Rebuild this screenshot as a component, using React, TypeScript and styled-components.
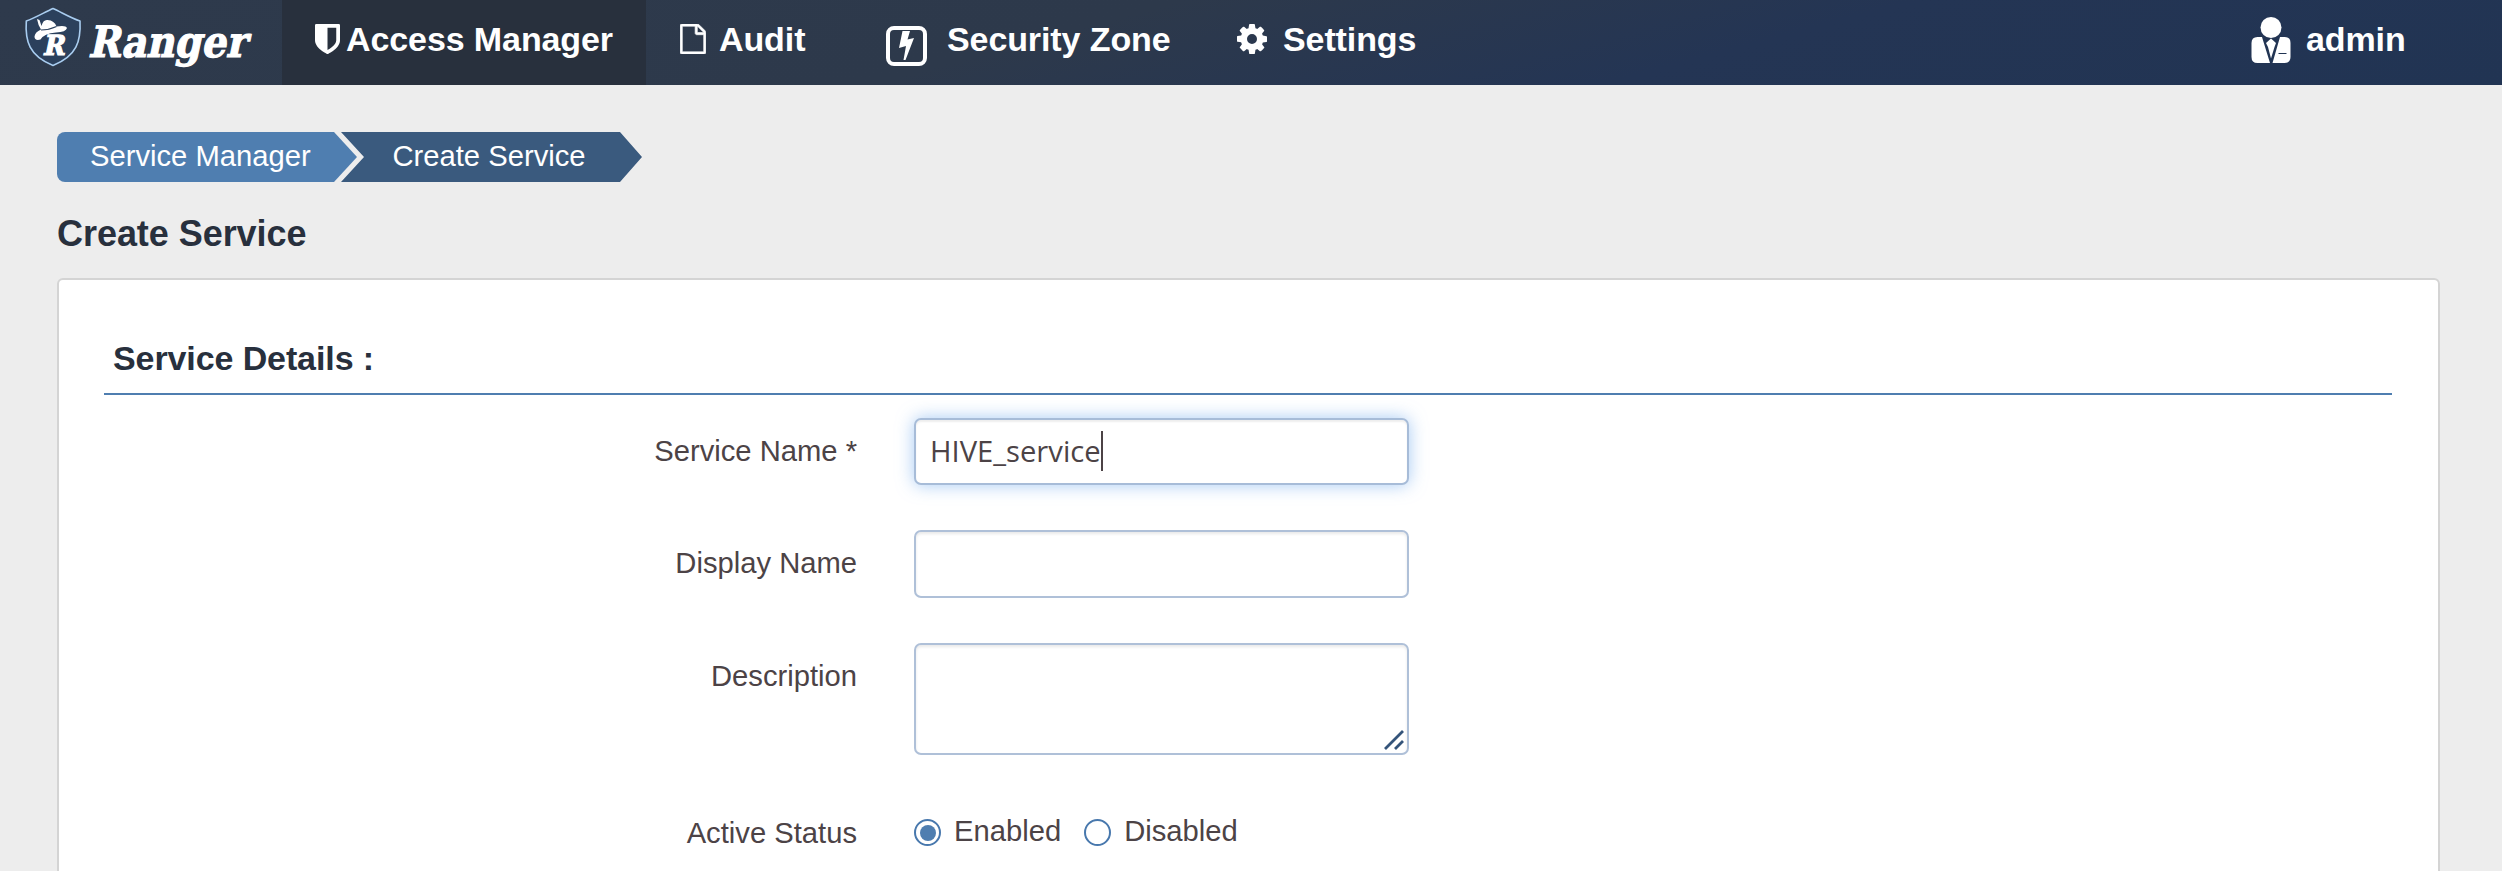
import React from "react";
import styled, { createGlobalStyle, css } from "styled-components";

const Global = createGlobalStyle`
  * { box-sizing: border-box; }
  html, body { margin: 0; padding: 0; background: #ededed; }
  body { font-family: "Liberation Sans", Arial, sans-serif; color: #4c4346; overflow: hidden; }
`;

const Page = styled.div`
  width: 2502px;
  height: 871px;
  overflow: hidden;
  background: #ededed;
`;

const Header = styled.header`
  display: flex;
  height: 85px;
  background: linear-gradient(165deg, #2e3a4c 0%, #2d394b 42%, #243554 68%, #213453 100%);
`;

const Brand = styled.a`
  display: block;
  width: 282px;
  height: 85px;
`;

const NavItem = styled.a<{ $active?: boolean; $left: number; $width?: number; $gap: number }>`
  display: flex;
  align-items: flex-start;
  height: 85px;
  width: ${(p) => (p.$width ? `${p.$width}px` : "auto")};
  padding-left: ${(p) => p.$left}px;
  gap: ${(p) => p.$gap}px;
  font-size: 34px;
  font-weight: 700;
  line-height: 40px;
  letter-spacing: -0.1px;
  white-space: nowrap;
  color: #fff;
  ${(p) => p.$active && css`background: #28303d;`}
  span { margin-top: 19px; }
`;

const Glyph = styled.svg<{ $top: number }>`
  flex: none;
  margin-top: ${(p) => p.$top}px;
`;

const User = styled(NavItem)`
  margin-left: auto;
`;

const Main = styled.main`
  padding: 47px 62px 0 57px;
`;

const Crumbs = styled.nav`
  display: flex;
  height: 50px;
  font-size: 29.2px;
  line-height: 48px;
  color: #fff;
`;

const Crumb = styled.a<{ $last?: boolean }>`
  white-space: nowrap;
  ${(p) =>
    p.$last
      ? css`
          width: 301px;
          margin-left: -16px;
          padding-left: 51.5px;
          background: #3a5a7e;
          clip-path: polygon(0 0, 279px 0, 100% 50%, 279px 100%, 0 100%, 23px 50%);
        `
      : css`
          width: 300px;
          padding-left: 33px;
          background: #4f7eb0;
          border-radius: 8px 0 0 8px;
          clip-path: polygon(0 0, 277px 0, 100% 50%, 277px 100%, 0 100%);
        `}
`;

const Title = styled.h1`
  margin: 31px 0 0;
  font-size: 36px;
  line-height: 42px;
  letter-spacing: -0.05px;
  color: #28303d;
`;

const Card = styled.section`
  height: 660px;
  margin-top: 23px;
  padding: 55px 46px 0 45px;
  background: #fff;
  border: 2px solid #d4d4d4;
  border-radius: 6px;
`;

const Legend = styled.h2`
  margin: 0;
  height: 60px;
  padding: 4px 0 0 9px;
  font-size: 34px;
  line-height: 38px;
  letter-spacing: -0.1px;
  color: #28303d;
  border-bottom: 2px solid #4f7eb0;
`;

const Form = styled.form`
  display: flex;
  flex-direction: column;
  padding-top: 23px;
`;

const Row = styled.div<{ $height: number }>`
  display: flex;
  gap: 57px;
  height: ${(p) => p.$height}px;
`;

const Label = styled.label<{ $top: number }>`
  width: 753px;
  padding-top: ${(p) => p.$top}px;
  text-align: right;
  font-size: 29.2px;
  line-height: 34px;
`;

const Field = styled.div<{ $height: number; $focus?: boolean }>`
  display: flex;
  justify-content: flex-start;
  width: 495px;
  height: ${(p) => p.$height}px;
  padding: 11px 14px;
  border: 2px solid #afc0d8;
  border-radius: 7px;
  background: #fff;
  font-family: "Open Sans", "Noto Sans", sans-serif;
  font-size: 29.2px;
  line-height: 40px;
  box-shadow: inset 0 2px 3px rgba(0, 0, 0, 0.09);
  ${(p) =>
    p.$focus &&
    css`
      border-color: #a7bcd8;
      box-shadow: inset 0 2px 2px rgba(0, 0, 0, 0.07), 0 0 17px rgba(111, 169, 238, 0.62);
    `}
`;

const Caret = styled.i`
  width: 2px;
  height: 40px;
  background: #4c4346;
`;

const Grip = styled.svg`
  margin: auto -11px -8px auto;
`;

const Radios = styled.div`
  display: flex;
  align-items: flex-start;
  font-size: 29.2px;
  line-height: 34px;
`;

const Radio = styled.span<{ $on?: boolean }>`
  width: 27px;
  height: 27px;
  margin: 5px 13px 0 0;
  border: 2px solid #4878ad;
  border-radius: 50%;
  background: ${(p) => (p.$on ? "#4f7eb0" : "#fff")};
  background-clip: content-box;
  padding: 3.5px;
`;

const Choice = styled.label`
  display: flex;
  margin-right: 23px;
`;

const Logo = () => (
  <svg width="282" height="85" viewBox="0 0 282 85">
    <path
      d="M53 8.500C45 12 35 18 26.300 21C25 41 29 56 53 65.500C77 56 81 41 80 21C71 18 61 12 53 8.500Z"
      fill="#2b405c" stroke="#a9cdf0" strokeWidth="1.600" strokeLinejoin="round"
    />
    <path d="M37 19L39.500 20L41.500 26Q43 19.500 47.500 20Q54.500 20.500 56.500 26.500Q66 25 67 28Q66 32 56 32.500Q44 33.500 40.500 39.500Q34.500 41 34.500 36.500Q35 32 41 29.500Q38 25 37 19Z" fill="#fff" />
    <path d="M41 30Q49 30 56.500 26.500" fill="none" stroke="#2b405c" strokeWidth="1.200" />
    <g fontFamily="DejaVu Serif" fontWeight="700" fill="#fff" stroke="#fff" strokeWidth="1.200">
      <text transform="translate(42.500 55) skewX(-12)" fontSize="27.500" textLength="21.500" lengthAdjust="spacingAndGlyphs">R</text>
      <text transform="translate(88 56.500) skewX(-12)" fontSize="43" textLength="158" lengthAdjust="spacingAndGlyphs">Ranger</text>
    </g>
  </svg>
);

export default function App() {
  return (
    <Page>
      <Global />
      <Header>
        <Brand><Logo /></Brand>
        <NavItem $active $left={33} $width={364} $gap={6}>
          <Glyph $top={24} width="25" height="30" viewBox="0 0 1280 1536" fill="#fff">
            <path d="M1088 832V192H640v1137q119-63 213-137 235-184 235-360zm192-768v768q0 86-33.500 170.500T1163 1152t-118 127.500-126 103-121 77.500-89.500 49.500T666 1530q-12 6-26 6t-26-6q-16-7-42.500-20.500T482 1460t-121-77.500-126-103T117 1152t-83.500-149.500T0 832V64q0-26 19-45T64 0h1152q26 0 45 19t19 45z" />
          </Glyph>
          <span>Access Manager</span>
        </NavItem>
        <NavItem $left={33.5} $width={240} $gap={13.5}>
          <Glyph $top={24} width="26" height="30" viewBox="0 0 1536 1792" fill="#fff" stroke="#fff" strokeWidth="40">
            <path d="M1468 380q28 28 48 76t20 88v1152q0 40-28 68t-68 28H96q-40 0-68-28t-28-68V96q0-40 28-68T96 0h896q40 0 88 20t76 48zm-444-244v376h376q-10-29-22-41l-313-313q-12-12-41-22zm384 1528V640H992q-40 0-68-28t-28-68V128H128v1536z" />
          </Glyph>
          <span>Audit</span>
        </NavItem>
        <NavItem $left={0} $width={351} $gap={20}>
          <Glyph $top={26} width="41" height="40" viewBox="0 0 41 40">
            <rect x="2" y="2" width="37" height="36" rx="6" fill="none" stroke="#fff" strokeWidth="4" />
            <path d="M16.500 5H24L21.500 13.500L28 12L19.500 34H17.500L20 20L13 22Z" fill="#fff" />
          </Glyph>
          <span>Security Zone</span>
        </NavItem>
        <NavItem $left={0} $gap={16}>
          <Glyph $top={24} width="30" height="30" viewBox="0 0 1536 1536" fill="#fff">
            <path d="M1024 768q0-106-75-181t-181-75-181 75-75 181 75 181 181 75 181-75 75-181zm512-109v222q0 12-8 23t-20 13l-185 28q-19 54-39 91 35 50 107 138 10 12 10 25t-9 23q-27 37-99 108t-94 71q-12 0-26-9l-138-108q-44 23-91 38-16 136-29 186-7 28-36 28H657q-14 0-24.500-8.500T621 1506l-28-184q-49-16-90-37l-141 107q-10 9-25 9-14 0-25-11-126-114-165-168-7-10-7-23 0-12 8-23 15-21 51-66.500t54-70.500q-27-50-41-99L29 913q-13-2-21-12.500T0 877V655q0-12 8-23t19-13l186-28q14-46 39-92-40-57-107-138-10-12-10-24 0-10 9-23 26-36 98.500-107.500T337 135q13 0 26 10l138 107q44-23 91-38 16-136 29-186 7-28 36-28h222q14 0 24.500 8.500T915 30l28 184q49 16 90 37l142-107q9-9 24-9 13 0 25 10 129 119 165 170 7 8 7 22 0 12-8 23-15 21-51 66.500t-54 70.500q26 50 41 98l183 28q13 2 21 12.500t8 23.500z" />
          </Glyph>
          <span>Settings</span>
        </NavItem>
        <User $left={0} $width={251} $gap={15}>
          <Glyph $top={17} width="40" height="46" viewBox="-0.500 0 40 46" fill="#fff">
            <circle cx="19.500" cy="10.500" r="10.500" />
            <path d="M6 20H10.500L18.500 46H6Q0 46 0 40V26Q0 20 6 20ZM28.500 20H33Q39 20 39 26V40Q39 46 33 46H21ZM19.500 21.500L24.500 26L23 30L19.500 41.500L16.500 30L14.500 26Z" />
            <path d="M27 36.500H35" stroke="#213453" strokeWidth="1" />
          </Glyph>
          <span>admin</span>
        </User>
      </Header>
      <Main>
        <Crumbs>
          <Crumb>Service Manager</Crumb>
          <Crumb $last>Create Service</Crumb>
        </Crumbs>
        <Title>Create Service</Title>
        <Card>
          <Legend>Service Details :</Legend>
          <Form>
            <Row $height={112}>
              <Label $top={16}>Service Name *</Label>
              <Field $height={67} $focus>HIVE_service<Caret /></Field>
            </Row>
            <Row $height={113}>
              <Label $top={16}>Display Name</Label>
              <Field $height={68} />
            </Row>
            <Row $height={171}>
              <Label $top={16}>Description</Label>
              <Field $height={112}>
                <Grip width="20" height="20" viewBox="0 0 20 20" stroke="#34547a" strokeWidth="2.800">
                  <path d="M1 19L19 1M11 19L19 11" />
                </Grip>
              </Field>
            </Row>
            <Row $height={57}>
              <Label $top={2}>Active Status</Label>
              <Radios>
                <Choice><Radio $on /><span>Enabled</span></Choice>
                <Choice><Radio /><span>Disabled</span></Choice>
              </Radios>
            </Row>
          </Form>
        </Card>
      </Main>
    </Page>
  );
}
